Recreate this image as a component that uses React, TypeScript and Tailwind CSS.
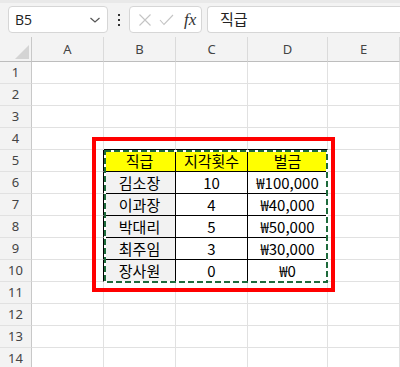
import React from "react";

const font = { fontFamily: '"Noto Sans CJK KR", "Noto Sans", sans-serif' };

type Cell = { text: string; kind?: "head" | "name" | "val" };

const table: Record<number, Cell[]> = {
  5: [
    { text: "직급", kind: "head" },
    { text: "지각횟수", kind: "head" },
    { text: "벌금", kind: "head" },
  ],
  6: [{ text: "김소장", kind: "name" }, { text: "10" }, { text: "₩100,000" }],
  7: [{ text: "이과장", kind: "name" }, { text: "4" }, { text: "₩40,000" }],
  8: [{ text: "박대리", kind: "name" }, { text: "5" }, { text: "₩50,000" }],
  9: [{ text: "최주임", kind: "name" }, { text: "3" }, { text: "₩30,000" }],
  10: [{ text: "장사원", kind: "name" }, { text: "0" }, { text: "₩0" }],
};

function RowCells({ r }: { r: number }) {
  const t = table[r];
  const inTable = !!t;
  const aborder = inTable ? "border-r-black" : "border-r-[#e1e1e1]";
  const topRowBorder = r === 4;
  return (
    <>
      <div className="flex items-center justify-center border-r border-b border-r-[#c8c8c8] border-b-[#e1e1e1] bg-[#f3f3f3] text-[13px] text-[#444]" style={{ fontFamily: '"Noto Sans", sans-serif' }}>
        {r}
      </div>
      <div className={`border-r border-b border-b-[#e1e1e1] ${aborder}`} />
      {[0, 1, 2].map((i) => {
        const c = t ? t[i] : undefined;
        if (c) {
          const bg = c.kind === "head" ? "bg-[#ffff00]" : c.kind === "name" ? "bg-[#f2f2f2]" : "bg-white";
          return (
            <div key={i} className={`flex items-center justify-center border-r border-b border-black text-[15px] leading-none text-black ${bg}`} style={font}>
              {c.text}
            </div>
          );
        }
        return (
          <div
            key={i}
            className={`border-r border-b border-r-[#e1e1e1] ${topRowBorder ? "border-b-black" : "border-b-[#e1e1e1]"}`}
          />
        );
      })}
      <div className="border-r border-b border-r-[#e1e1e1] border-b-[#e1e1e1]" />
    </>
  );
}

export default function App() {
  const rows = Array.from({ length: 14 }, (_, i) => i + 1);
  return (
    <div className="relative h-[367px] w-[400px] overflow-hidden bg-white" style={{ fontFamily: '"Noto Sans", sans-serif' }}>
      {/* formula bar */}
      <div className="flex h-[37px] items-start border-t-[3px] border-t-[#e9e9e9] bg-[#f3f3f3] pt-[3px]">
        <div className="ml-[8px] flex h-[27px] w-[100px] items-center justify-between rounded-[4px] border border-[#d6d6d6] bg-white pl-[6px] pr-[6px]">
          <span className="text-[14px] text-[#222]" style={{ fontFamily: '"Open Sans", sans-serif' }}>B5</span>
          <svg width="12" height="8" viewBox="0 0 12 8">
            <path d="M1.5 2 L6 6 L10.5 2" fill="none" stroke="#555" strokeWidth="1.2" />
          </svg>
        </div>
        <div className="flex h-[27px] w-[21px] flex-col items-center justify-center gap-[3px]">
          <span className="h-[2px] w-[2px] bg-[#333]" />
          <span className="h-[2px] w-[2px] bg-[#333]" />
          <span className="h-[2px] w-[2px] bg-[#333]" />
        </div>
        <div className="flex h-[27px] w-[73px] items-center rounded-[4px] border border-[#d6d6d6] bg-white pl-[8px]">
          <svg width="14" height="14" viewBox="0 0 14 14">
            <path d="M1.5 1.5 L12.5 12.5 M12.5 1.5 L1.5 12.5" stroke="#c4c4c4" strokeWidth="1.1" fill="none" />
          </svg>
          <svg className="ml-[7px]" width="15" height="12" viewBox="0 0 15 12">
            <path d="M1 6 L5 10.5 L14 1" stroke="#c4c4c4" strokeWidth="1.1" fill="none" />
          </svg>
          <span className="ml-[10px] text-[17px] italic leading-none text-[#333]" style={{ fontFamily: '"Liberation Serif", serif' }}>
            fx
          </span>
        </div>
        <div className="ml-[5px] flex h-[27px] flex-1 items-center rounded-l-[4px] border border-r-0 border-[#d6d6d6] bg-white pl-[12px]">
          <span className="text-[15px] text-[#222]" style={font}>직급</span>
        </div>
      </div>

      {/* grid */}
      <div className="grid grid-cols-[32px_72px_72px_72px_80px_1fr] grid-rows-[25px_repeat(14,22px)]">
        <div className="relative border-r border-b border-r-[#c8c8c8] border-b-[#bdbdbd] bg-[#f3f3f3]">
          <svg className="absolute left-[15px] top-[8px]" width="14" height="14" viewBox="0 0 14 14">
            <path d="M14 0 L14 14 L0 14 Z" fill="#d4d4d4" />
          </svg>
        </div>
        {["A", "B", "C", "D", "E"].map((l) => (
          <div key={l} className="flex items-center justify-center border-r border-b border-r-[#dadada] border-b-[#bdbdbd] bg-[#f3f3f3] pt-[2px] text-[13px] text-[#444]">
            {l}
          </div>
        ))}
        {rows.map((r) => (
          <RowCells key={r} r={r} />
        ))}
      </div>

      {/* copy marquee */}
      <svg className="absolute left-[104px] top-[150px]" width="224" height="133" viewBox="0 0 224 133">
        <rect x="1" y="1" width="222" height="131" fill="none" stroke="#ffffff" strokeWidth="2" />
        <rect x="1" y="1" width="222" height="131" fill="none" stroke="#1e6b3c" strokeWidth="2" strokeDasharray="6 3" />
      </svg>

      {/* red shape */}
      <div className="absolute left-[92px] top-[137px] h-[155px] w-[243px] border-4 border-[#ff0000]" />
    </div>
  );
}
